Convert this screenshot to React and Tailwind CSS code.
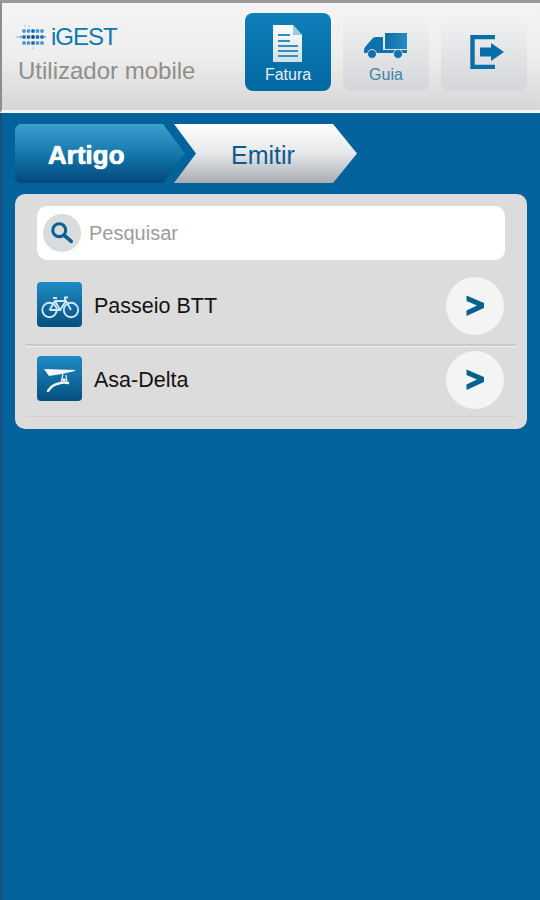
import React from 'react';

const font = { fontFamily: '"Liberation Sans", Arial, sans-serif' };

const logoCols = [0, 4.5, 9, 13.5, 18];
const logoRows = [1, 7, 13];

const LogoDots = () => (
  <svg width="30" height="26" viewBox="-8 -6 30 26" className="shrink-0">
    {logoRows.map((y) =>
      logoCols.map((x) => (
        <rect
          key={`${x}-${y}`}
          x={x - 1.7}
          y={y - 1.7}
          width="3.4"
          height="3.4"
          rx="0.8"
          fill={x === 9 && y === 7 ? '#10389a' : x === 9 || y === 7 ? '#1769ae' : '#3f98cf'}
        />
      ))
    )}
    <circle cx="-6.5" cy="7" r="1" fill="#7fc0e2" />
    <circle cx="-3.5" cy="7" r="1.2" fill="#5aaad8" />
    <circle cx="21" cy="7" r="1" fill="#5aaad8" />
    <circle cx="1" cy="-4" r="1" fill="#a8d3ea" />
    <circle cx="5" cy="-4" r="1" fill="#a8d3ea" />
    <circle cx="9" cy="18" r="1" fill="#a8d3ea" />
  </svg>
);

const DocIcon = () => (
  <svg width="30" height="37" viewBox="0 0 30 37">
    <defs>
      <linearGradient id="docg" x1="0" y1="0" x2="0" y2="1">
        <stop offset="0" stopColor="#ffffff" />
        <stop offset="1" stopColor="#cfe0ea" />
      </linearGradient>
    </defs>
    <path d="M0 0H20L29 10V37H0Z" fill="url(#docg)" />
    <path d="M20 0L29 10H20Z" fill="#9cc8e0" />
    <path d="M5 10H17M5 16H17M5 21H25M5 26H25M5 31H25" stroke="#3a8db8" strokeWidth="2" />
  </svg>
);

const TruckIcon = () => (
  <svg width="44" height="26" viewBox="0 0 44 26">
    <defs>
      <linearGradient id="boxg" x1="0" y1="0" x2="1" y2="0">
        <stop offset="0" stopColor="#0a6ea8" />
        <stop offset="1" stopColor="#2b8cc4" />
      </linearGradient>
    </defs>
    <rect x="21" y="0" width="22" height="16" fill="url(#boxg)" />
    <path d="M0 20V17Q0 15 2 13L8 6Q9 4 12 4H19V20Z" fill="#0b72ad" />
    <rect x="19" y="17" width="24" height="3" fill="#0b72ad" />
    <circle cx="8" cy="21" r="4.5" fill="#0b72ad" stroke="#dfe1e4" strokeWidth="1" />
    <circle cx="34" cy="21" r="4.5" fill="#0b72ad" stroke="#dfe1e4" strokeWidth="1" />
  </svg>
);

const ExitIcon = () => (
  <svg width="34" height="34" viewBox="0 0 34 34" className="ml-[5px]">
    <path d="M25 2H2.5V32H25" fill="none" stroke="#0a6ea8" strokeWidth="4.4" />
    <path d="M10 12.5H21V8L34 17L21 26V21.5H10Z" fill="#0a6ea8" />
  </svg>
);

const SearchIcon = () => (
  <svg width="24" height="24" viewBox="0 0 26 26">
    <circle cx="10" cy="10" r="7" fill="none" stroke="#07628f" strokeWidth="3.4" />
    <path d="M15.5 15.5L23 22" stroke="#07628f" strokeWidth="4" strokeLinecap="round" />
  </svg>
);

const BikeIcon = () => (
  <svg width="45" height="45" viewBox="0 0 45 45" fill="none" stroke="#cfe6f3" strokeWidth="1.9">
    <circle cx="12.5" cy="28" r="7.2" />
    <circle cx="34" cy="28" r="7.2" />
    <path d="M12.5 28L18 19H29L34 28M18 19L23 28H12.5M29 19L23 28M16 16H20M28 19V15.5H31" />
  </svg>
);

const GliderIcon = () => (
  <svg width="45" height="45" viewBox="0 0 45 45">
    <path d="M7 13L39 14L36 15.5Q30 16.5 25 18Q18 19 12 20Z" fill="#f4f9fc" />
    <path d="M11 35Q15 29 20 28Q26 26 31 27" fill="none" stroke="#f4f9fc" strokeWidth="2.4" strokeLinecap="round" />
    <path d="M26 18L24 27M29 19L30 27" fill="none" stroke="#e2eff6" strokeWidth="1.3" />
    <circle cx="27" cy="24" r="1.8" fill="#f4f9fc" />
  </svg>
);

const ChevronRightIcon = () => (
  <svg width="20" height="22" viewBox="0 0 20 22">
    <path d="M1.5 0.5L19 8V13L1.5 21V15.5L12 10.5L1.5 6Z" fill="#07628f" />
  </svg>
);

const HeaderButton = ({ active, children }) => (
  <div
    className={`w-[86px] h-[78px] rounded-lg flex flex-col items-center justify-center ${
      active
        ? 'bg-gradient-to-b from-[#0e7fba] to-[#0468a0] text-[#e6f0f6]'
        : 'bg-gradient-to-b from-[#f4f4f5] to-[#d4d6d9] text-[#3d85a8]'
    }`}
  >
    {children}
  </div>
);

const LabeledIcon = ({ label, children, itemsClass }) => (
  <div className="flex flex-col items-center pt-[4px]">
    <div className={`h-[37px] flex ${itemsClass}`}>{children}</div>
    <span className="text-base leading-4 mt-[5px]">{label}</span>
  </div>
);

const Row = ({ icon, label, mt, dividerClass }) => (
  <div>
    <div className={`flex items-center justify-between pl-[11px] pr-[12px] ${mt}`}>
      <div className="flex items-center">
        <div className="w-[45px] h-[45px] mb-[4px] rounded-[4px] flex items-center justify-center bg-gradient-to-b from-[#1f8dc4] to-[#054f80]">
          {icon}
        </div>
        <span className="ml-3 text-[21.5px] leading-6 text-[#15130f]">{label}</span>
      </div>
      <div className="w-[58px] h-[58px] rounded-full bg-[#f3f4f4] flex items-center justify-center">
        <ChevronRightIcon />
      </div>
    </div>
    <div className={dividerClass} />
  </div>
);

const App = () => {
  return (
    <div className="w-[540px] h-[900px] bg-[#02639c] overflow-hidden" style={font}>
      <header className="h-[113px] bg-gradient-to-b from-[#f4f4f4] via-[#eeeeee] to-[#d6d6d6] border-t-[3px] border-t-[#9a9a9a] border-l-[2px] border-l-[#8d8d8d] border-b-[3px] border-b-[#f6f6f6] flex justify-between pl-[14px] pr-[13px]">
        <div className="pt-[21px]">
          <div className="flex items-center h-[26px]">
            <LogoDots />
            <span className="text-2xl leading-6 text-[#0d79ad] ml-[5px] tracking-[-1px]">iGEST</span>
          </div>
          <div className="text-2xl leading-[28px] text-[#8f8f8b] mt-[7px] ml-[2px]">Utilizador mobile</div>
        </div>
        <div className="flex gap-3 pt-[10px]">
          <HeaderButton active>
            <LabeledIcon label="Fatura" itemsClass="items-start">
              <DocIcon />
            </LabeledIcon>
          </HeaderButton>
          <HeaderButton>
            <LabeledIcon label="Guia" itemsClass="items-end pb-[3px]">
              <TruckIcon />
            </LabeledIcon>
          </HeaderButton>
          <HeaderButton>
            <ExitIcon />
          </HeaderButton>
        </div>
      </header>

      <div className="h-[787px] border-l-[2px] border-l-[#1d4f78] pl-[13px] pr-[13px] pt-[11px]">
        <div className="flex h-[59px]">
          <div className="w-[170px] bg-gradient-to-b from-[#3c9fcf] via-[#1479ad] to-[#03477c] [clip-path:polygon(0_4px,4px_0,148px_0,170px_50%,148px_100%,4px_100%,0_calc(100%-4px))] flex items-center text-[26px] font-bold text-white pl-[33px] pt-[4px] [text-shadow:0_0_1px_#ffffff,0_0_1px_#ffffff]">
            Artigo
          </div>
          <div className="w-[183px] -ml-[11px] bg-gradient-to-b from-[#ffffff] via-[#e6e7e9] to-[#a9acb1] [clip-path:polygon(0_0,159px_0,183px_50%,159px_100%,0_100%,22px_50%)] flex items-center text-[25px] text-[#0b5c8d] pl-[57px] pt-[4px]">
            Emitir
          </div>
        </div>

        <div className="mt-[11px] h-[235px] bg-[#dcdcdc] rounded-[10px] px-[11px] pt-[12px]">
          <div className="mx-[11px] h-[54px] bg-white rounded-[10px] flex items-center pl-[6px]">
            <div className="w-[38px] h-[38px] rounded-full bg-[#d8dcdf] flex items-center justify-center">
              <SearchIcon />
            </div>
            <span className="ml-2 text-xl text-[#9c9c9c]">Pesquisar</span>
          </div>
          <Row
            icon={<BikeIcon />}
            label="Passeio BTT"
            mt="mt-[17px]"
            dividerClass="mt-[9px] h-[3px] bg-[#c9c9c9] border-b border-b-[#f0f0f0]"
          />
          <Row
            icon={<GliderIcon />}
            label="Asa-Delta"
            mt="mt-[4px]"
            dividerClass="mt-[7px] h-[1px] bg-[#d0d0d0]"
          />
        </div>
      </div>
    </div>
  );
};

export default App;
